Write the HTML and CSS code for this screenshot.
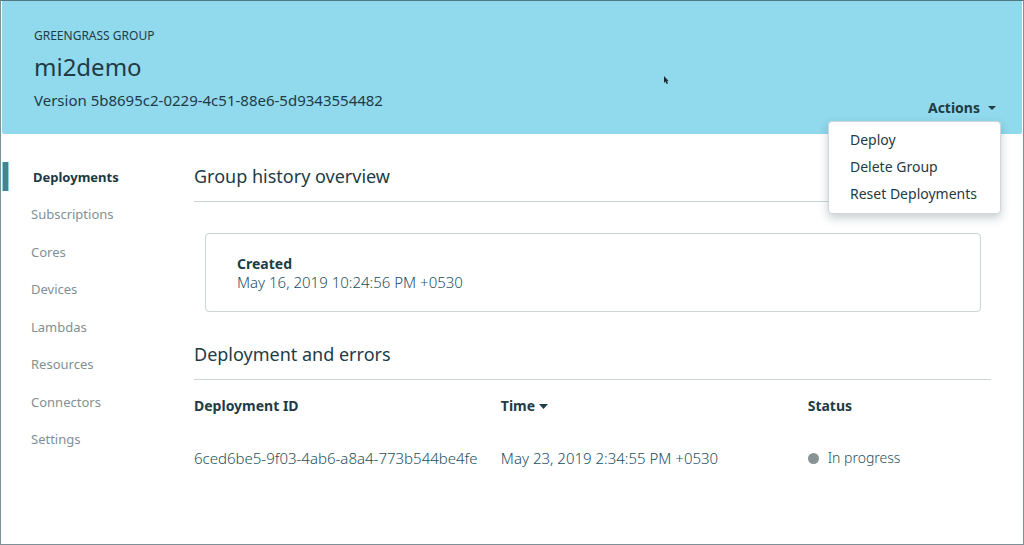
FILE: index.html
```
<!DOCTYPE html>
<html lang="en">
<head>
<meta charset="utf-8">
<meta name="viewport" content="width=device-width, initial-scale=1">
<title>mi2demo - Greengrass group</title>
<link rel="stylesheet" href="styles.css">
</head>
<body>
<div class="page">
  <header class="banner">
    <div class="banner-text">
      <p class="eyebrow">GREENGRASS GROUP</p>
      <h1 class="title">mi2demo</h1>
      <p class="version">Version 5b8695c2-0229-4c51-88e6-5d9343554482</p>
    </div>
    <svg class="pointer" viewBox="0 0 6 10" aria-hidden="true"><path d="M1 1v7l1.500-1.500 1 2.500 1.500-.6-1-2.300h1.600z"/></svg>
    <div class="actions">
      <button class="actions-button" type="button" aria-haspopup="true" aria-expanded="true">Actions
        <svg class="caret" viewBox="0 0 8 4" aria-hidden="true"><path d="M0 0h8L4 4z"/></svg>
      </button>
      <div class="menu">
        <button class="menu-item" type="button">Deploy</button>
        <button class="menu-item" type="button">Delete Group</button>
        <button class="menu-item" type="button">Reset Deployments</button>
      </div>
    </div>
  </header>
  <div class="body">
    <nav class="side">
      <a class="side-link side-link-active" href="#deployments">Deployments</a>
      <a class="side-link" href="#subscriptions">Subscriptions</a>
      <a class="side-link" href="#cores">Cores</a>
      <a class="side-link" href="#devices">Devices</a>
      <a class="side-link" href="#lambdas">Lambdas</a>
      <a class="side-link" href="#resources">Resources</a>
      <a class="side-link" href="#connectors">Connectors</a>
      <a class="side-link" href="#settings">Settings</a>
    </nav>
    <main class="content">
      <h2 class="section-title">Group history overview</h2>
      <dl class="card">
        <dt class="card-label">Created</dt>
        <dd class="card-value">May 16, 2019 10:24:56 PM +0530</dd>
      </dl>
      <h2 class="section-title">Deployment and errors</h2>
      <table class="table">
        <thead>
          <tr>
            <th class="col-wide" scope="col">Deployment ID</th>
            <th class="col-wide" scope="col"><button class="sort" type="button">Time<svg class="sort-caret" viewBox="0 0 9 5" aria-hidden="true"><path d="M0 0h9L4.500 5z"/></svg></button></th>
            <th scope="col">Status</th>
          </tr>
        </thead>
        <tbody>
          <tr>
            <td>6ced6be5-9f03-4ab6-a8a4-773b544be4fe</td>
            <td>May 23, 2019 2:34:55 PM +0530</td>
            <td><span class="status"><span class="dot"></span>In progress</span></td>
          </tr>
        </tbody>
      </table>
    </main>
  </div>
</div>
</body>
</html>
```
FILE: styles.css
```
* { box-sizing: border-box; }
body {
  margin: 0;
  background: #fff;
  color: #1d3c47;
  font: 14px/20px "Noto Sans", "Open Sans", sans-serif;
}
p, h1, h2, dl, dd { margin: 0; }
button {
  border: 0;
  padding: 0;
  background: none;
  color: inherit;
  font: inherit;
  cursor: pointer;
}
.page {
  min-height: 100vh;
  border: 1px solid #7f9096;
  border-top-color: #547681;
}
.banner {
  position: relative;
  display: flex;
  justify-content: space-between;
  align-items: flex-end;
  margin: 0 1px;
  padding: 25px 26px 16px 32px;
  background: #91d9ed;
  border-radius: 0 0 2px 2px;
  color: #1f3b45;
}
.banner-text { padding-bottom: 7px; }
.eyebrow { font-size: 12px; }
.title {
  padding: 3px 0 4px;
  font-size: 24px;
  font-weight: 400;
  line-height: 36px;
}
.version { font-size: 15px; line-height: 22px; }
.pointer {
  position: absolute;
  left: calc(65% - 2px);
  top: 74px;
  width: 6px;
  height: 10px;
  fill: #1f2c33;
}
.actions { position: relative; }
.actions-button {
  display: flex;
  align-items: center;
  gap: 8px;
  font-weight: 700;
}
.caret { width: 8px; height: 4px; fill: currentColor; }
.menu {
  position: absolute;
  z-index: 1;
  top: 23px;
  right: -5px;
  display: flex;
  flex-direction: column;
  align-items: flex-start;
  min-width: 173px;
  padding: 4px 21px 6px;
  background: #fff;
  border: 1px solid #d0d8da;
  border-radius: 4px;
  box-shadow: 0 4px 10px rgba(30, 60, 70, .25);
  white-space: nowrap;
}
.menu-item { line-height: 27px; }
.body { display: flex; }
.side {
  display: grid;
  grid-auto-rows: 1fr;
  flex: 0 0 193px;
  height: 300px;
  margin-top: 24px;
}
.side-link {
  display: flex;
  align-items: center;
  padding-left: 30px;
  color: #7f9094;
  font-size: 13px;
  text-decoration: none;
}
.side-link-active {
  color: #1b3842;
  font-weight: 700;
}
.side-link-active::before {
  content: "";
  width: 5px;
  height: 29px;
  margin: 0 24px 0 -29px;
  background: #4d7f90;
  border: solid #8bd3e6;
  border-width: 0 1px;
}
.content {
  flex: 1;
  min-width: 0;
  padding: 24px 32px 0 0;
}
.section-title {
  padding: 4px 0 11px;
  border-bottom: 1px solid #cdd4d6;
  font-size: 18px;
  font-weight: 400;
  line-height: 28px;
}
.card {
  margin: 31px 10px 24px 11px;
  padding: 21px 31px 20px;
  border: 1px solid #cdd4d6;
  border-radius: 4px;
  line-height: 18px;
}
.card-label { font-weight: 700; }
.card-value, .table td { color: #25505e; font-size: 15px; font-weight: 300; }
.table {
  width: 100%;
  border-collapse: collapse;
  table-layout: fixed;
}
.table th {
  padding: 16px 0;
  font-weight: 700;
  text-align: left;
}
.table td { padding: 16px 0; }
.col-wide { width: 38.5%; }
.sort { display: flex; align-items: center; gap: 4px; font-weight: 700; }
.sort-caret { width: 9px; height: 5px; fill: currentColor; }
.status { display: flex; align-items: center; gap: 9px; font-size: 14px; }
.dot { width: 11px; height: 11px; border-radius: 50%; background: #879396; }
```
